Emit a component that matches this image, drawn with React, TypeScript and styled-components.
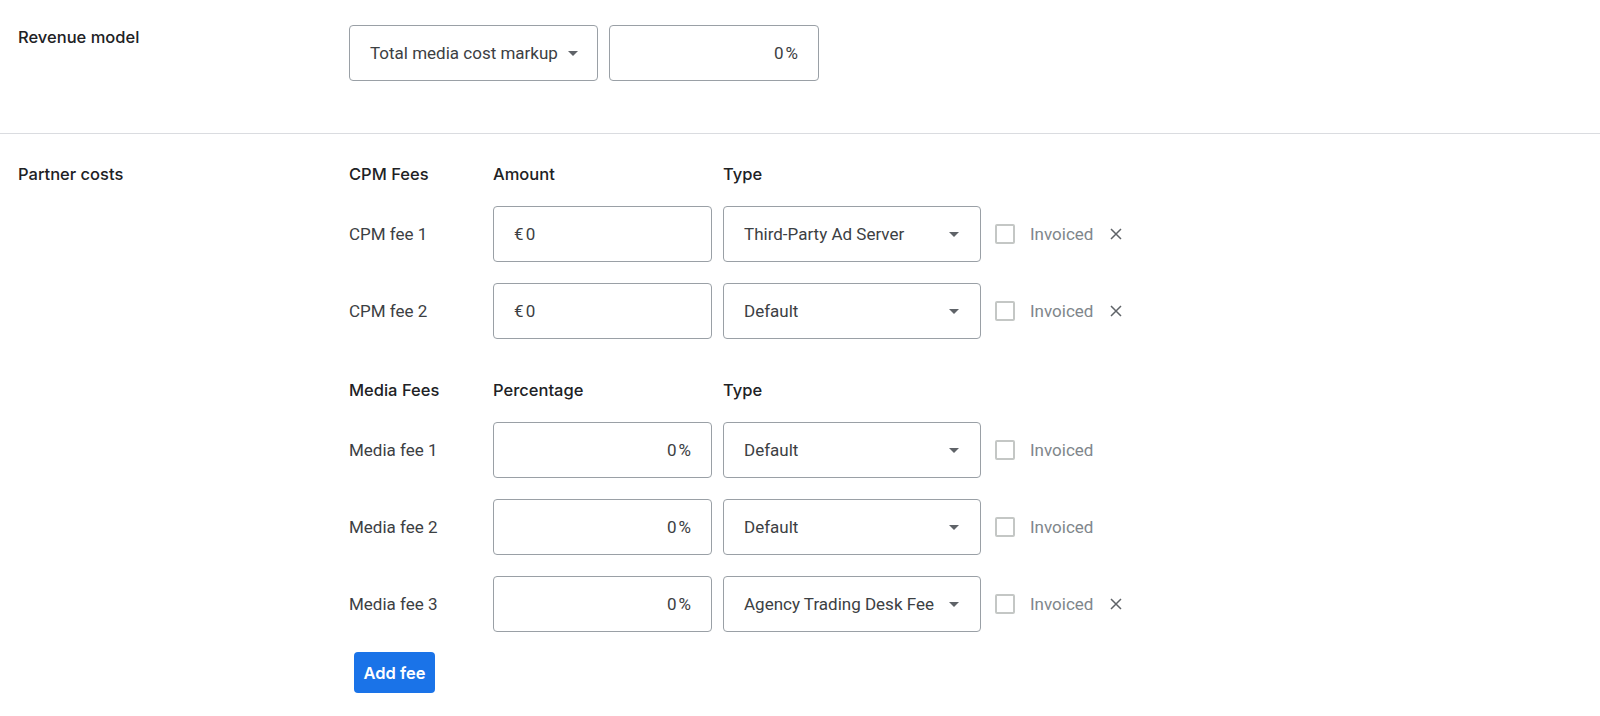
import styled, { createGlobalStyle } from 'styled-components';

const GlobalStyle = createGlobalStyle`
  body {
    margin: 0;
    background: #fff;
    font-family: Roboto, "Liberation Sans", sans-serif;
    color: #3c4043;
  }
`

const Section = styled.section<{ $top: number; $bottom: number; $divider?: boolean }>`
  display: grid;
  grid-template-columns: 331px 1fr;
  padding: ${p => p.$top}px 18px ${p => p.$bottom}px;
  border-bottom: ${p => (p.$divider ? '1px solid #dadce0' : 'none')};
`

const SectionLabel = styled.div<{ $offset: number }>`
  font-family: Inter, "Open Sans", sans-serif;
  font-size: 16.5px;
  font-weight: 500;
  line-height: 20px;
  color: #202124;
  padding-top: ${p => p.$offset}px;
`

const RevenueRow = styled.div`
  display: flex;
  gap: 11px;
`

const Box = styled.div<{ $width: number; $align?: 'left' | 'right' }>`
  box-sizing: border-box;
  width: ${p => p.$width}px;
  height: 56px;
  border: 1px solid #9aa0a6;
  border-radius: 4px;
  display: flex;
  align-items: center;
  justify-content: ${p => (p.$align === 'right' ? 'flex-end' : 'space-between')};
  padding: 0 20px;
  font-size: 17px;
  color: #3c4043;
  white-space: nowrap;
`

const SelectBox = styled(Box)<{ $arrowGap: number }>`
  padding-right: ${p => p.$arrowGap}px;
`

const Arrow = styled.span`
  width: 0;
  height: 0;
  border-left: 5px solid transparent;
  border-right: 5px solid transparent;
  border-top: 5px solid #5f6368;
  flex: none;
  margin-left: 10px;
`

const Fees = styled.div`
  display: flex;
  flex-direction: column;
  align-items: flex-start;
`

const FeeGrid = styled.div<{ $top?: number }>`
  display: grid;
  grid-template-columns: 133px 219px 258px auto;
  column-gap: 11px;
  row-gap: 21px;
  align-items: center;
  margin-top: ${p => p.$top ?? 0}px;
`

const HeadCell = styled.div`
  font-family: Inter, "Open Sans", sans-serif;
  font-size: 16.5px;
  font-weight: 500;
  line-height: 20px;
  color: #202124;
  margin-bottom: 1px;
`

const RowLabel = styled.div`
  font-size: 17px;
  color: #3c4043;
`

const Extras = styled.div`
  display: flex;
  align-items: center;
  margin-left: 3px;
`

const Checkbox = styled.span`
  box-sizing: border-box;
  width: 20px;
  height: 20px;
  border: 2px solid #c4c7c5;
  border-radius: 2px;
  margin-right: 15px;
`

const Invoiced = styled.span`
  font-size: 17px;
  color: #80868b;
`

const Remove = styled.button`
  border: none;
  background: none;
  padding: 0;
  margin-left: 17px;
  width: 12px;
  height: 12px;
  display: flex;
  cursor: pointer;
`

const AddButton = styled.button`
  margin: 20px 0 0 5px;
  width: 81px;
  height: 41px;
  border: none;
  border-radius: 4px;
  background: #1a73e8;
  color: #fff;
  font-family: Inter, "Open Sans", sans-serif;
  font-size: 16.5px;
  font-weight: 600;
  padding: 0;
  cursor: pointer;
`

const CloseIcon = () => (
  <svg width="12" height="12" viewBox="0 0 12 12">
    <path d="M1 1L11 11M11 1L1 11" stroke="#5f6368" strokeWidth="1.5" />
  </svg>
)

type Fee = { label: string; value: string; type: string; removable: boolean }

const cpmFees: Fee[] = [
  { label: 'CPM fee 1', value: '€\u202F0', type: 'Third-Party Ad Server', removable: true },
  { label: 'CPM fee 2', value: '€\u202F0', type: 'Default', removable: true },
]

const mediaFees: Fee[] = [
  { label: 'Media fee 1', value: '0\u202F%', type: 'Default', removable: false },
  { label: 'Media fee 2', value: '0\u202F%', type: 'Default', removable: false },
  { label: 'Media fee 3', value: '0\u202F%', type: 'Agency Trading Desk Fee', removable: true },
]

const FeeRows = ({ fees, align }: { fees: Fee[]; align: 'left' | 'right' }) => (
  <>
    {fees.map(f => (
      <div key={f.label} style={{ display: 'contents' }}>
        <RowLabel>{f.label}</RowLabel>
        <Box $width={219} $align={align}>{f.value}</Box>
        <SelectBox $width={258} $arrowGap={21}>
          {f.type}
          <Arrow />
        </SelectBox>
        <Extras>
          <Checkbox />
          <Invoiced>Invoiced</Invoiced>
          {f.removable && (
            <Remove aria-label="Remove fee">
              <CloseIcon />
            </Remove>
          )}
        </Extras>
      </div>
    ))}
  </>
)

export default function App() {
  return (
    <>
      <GlobalStyle />
      <Section $top={25} $bottom={52} $divider>
        <SectionLabel $offset={2}>Revenue model</SectionLabel>
        <RevenueRow>
          <SelectBox $width={249} $arrowGap={19}>
            Total media cost markup
            <Arrow />
          </SelectBox>
          <Box $width={210} $align="right">0{'\u202F'}%</Box>
        </RevenueRow>
      </Section>
      <Section $top={30} $bottom={30}>
        <SectionLabel $offset={0}>Partner costs</SectionLabel>
        <Fees>
          <FeeGrid>
            <HeadCell>CPM Fees</HeadCell>
            <HeadCell>Amount</HeadCell>
            <HeadCell>Type</HeadCell>
            <span />
            <FeeRows fees={cpmFees} align="left" />
          </FeeGrid>
          <FeeGrid $top={41}>
            <HeadCell>Media Fees</HeadCell>
            <HeadCell>Percentage</HeadCell>
            <HeadCell>Type</HeadCell>
            <span />
            <FeeRows fees={mediaFees} align="right" />
          </FeeGrid>
          <AddButton>Add fee</AddButton>
        </Fees>
      </Section>
    </>
  )
}
